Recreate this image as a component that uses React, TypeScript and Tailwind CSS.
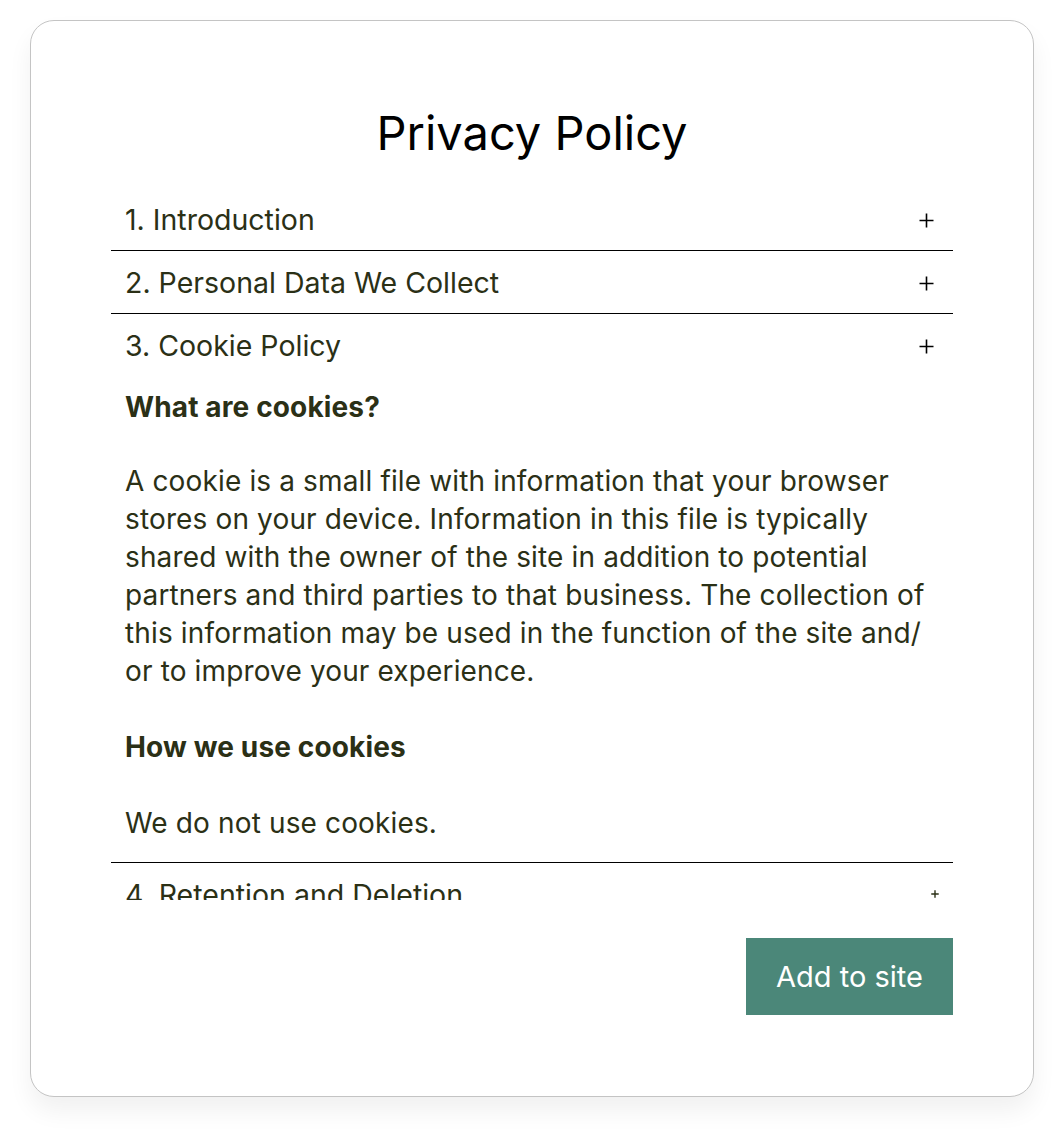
import { useState } from "react";

const sections = [
  { id: 1, title: "1. Introduction" },
  { id: 2, title: "2. Personal Data We Collect" },
  { id: 3, title: "3. Cookie Policy" },
  { id: 4, title: "4. Retention and Deletion" },
];

const Plus = ({ small }: { small?: boolean }) => (
  <svg
    width={small ? 8 : 15}
    height={small ? 8 : 15}
    viewBox="0 0 15 15"
    className={small ? "text-[#2b3016]" : "text-black"}
  >
    <path d="M7.5 0.5v14M0.5 7.5h14" stroke="currentColor" strokeWidth={small ? 2.6 : 1.6} fill="none" />
  </svg>
);

const App = () => {
  const [open] = useState(3);

  return (
    <div className="min-h-screen bg-white pt-[20px] pl-[30px] font-['Inter','Liberation_Sans',sans-serif]">
      <div className="w-[1004px] h-[1077px] rounded-[24px] border border-[#c4c4c4] bg-white shadow-[0_14px_24px_rgba(0,0,0,0.06)] flex flex-col px-[80px] pt-[84px]">
        <h1 className="text-center text-[47px] leading-[56px] text-black">Privacy Policy</h1>

        <div className="mt-[27px] h-[712px] overflow-hidden text-[#2b3016]">
          {sections.map((s, i) => (
            <div key={s.id} className={i < sections.length - 1 ? "border-b border-black" : ""}>
              <div className="flex items-center justify-between pl-[14px] pr-[19px] h-[62px] pt-[2px]">
                <span className="text-[28.5px] leading-[38px]">{s.title}</span>
                {s.id === 4 ? (
                  <span className="mr-[-5px] mt-[-2px]">
                    <Plus small />
                  </span>
                ) : (
                  <Plus />
                )}
              </div>
              {open === s.id && (
                <div className="px-[14px] pt-[12px] pb-[20px] text-[28px] leading-[38px] tracking-[0.005em]">
                  <p className="font-bold">What are cookies?</p>
                  <p className="mt-[36px]">
                    A cookie is a small file with information that your browser stores on your device. Information in this file is typically shared with the owner of the site in addition to potential partners and third parties to that business. The collection of this information may be used in the function of the site and/ or to improve your experience.
                  </p>
                  <p className="mt-[38px] font-bold">How we use cookies</p>
                  <p className="mt-[38px]">We do not use cookies.</p>
                </div>
              )}
            </div>
          ))}
        </div>

        <div className="mt-[38px] flex justify-end">
          <button className="w-[207px] h-[77px] bg-[#4b8779] text-white text-[29px]">Add to site</button>
        </div>
      </div>
    </div>
  );
};

export default App;
